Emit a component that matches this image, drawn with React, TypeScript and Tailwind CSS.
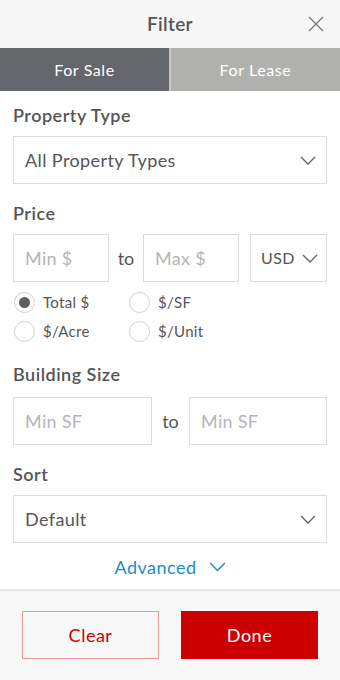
import React from "react";

const Chevron = ({ color = "#666", w = 16 }: { color?: string; w?: number }) => (
  <svg width={w} height={w / 2 + 1} viewBox="0 0 16 9" fill="none">
    <path d="M1 1 L8 8 L15 1" stroke={color} strokeWidth="1.4" />
  </svg>
);

const Radio = ({ checked, label }: { checked?: boolean; label: string }) => (
  <div className="flex items-center gap-[8px] h-[24px]">
    <div className="w-[21px] h-[21px] rounded-full border border-[#cfcfcf] bg-white flex items-center justify-center">
      {checked && <div className="w-[11px] h-[11px] rounded-full bg-[#5b5e63]" />}
    </div>
    <span className="text-[15px] tracking-[0.3px] text-[#555]">{label}</span>
  </div>
);

export default function App() {
  return (
    <div
      className="w-[340px] h-[680px] flex flex-col bg-white"
      style={{ fontFamily: "Lato, 'Noto Sans', sans-serif" }}
    >
      <div className="h-[48px] bg-[#f7f7f7] flex items-center justify-center relative">
        <span className="text-[19px] tracking-[0.3px] font-semibold text-[#555]">Filter</span>
        <svg className="absolute left-[308px] top-[16px]" width="16" height="16" viewBox="0 0 16 16">
          <path d="M1 1 L15 15 M15 1 L1 15" stroke="#777" strokeWidth="1.3" />
        </svg>
      </div>
      <div className="flex h-[43px]">
        <div className="w-[169px] bg-[#63666b] text-white text-[16px] tracking-[0.6px] flex items-center justify-center">For Sale</div>
        <div className="w-[2px] bg-[#c9cac8]" />
        <div className="flex-1 bg-[#b0b1ae] text-white text-[16px] tracking-[0.6px] flex items-center justify-center">For Lease</div>
      </div>
      <div className="flex-1 px-[13px] flex flex-col">
        <div className="mt-[12px] text-[18px] tracking-[0.5px] font-semibold text-[#555] h-[24px] leading-[24px]">Property Type</div>
        <div className="mt-[9px] h-[48px] border border-[#dcdcdc] flex items-center justify-between pl-[11px] pr-[10px]">
          <span className="text-[18px] tracking-[0.4px] text-[#555]">All Property Types</span>
          <Chevron />
        </div>
        <div className="mt-[17px] text-[18px] tracking-[0.5px] font-semibold text-[#555] h-[24px] leading-[24px]">Price</div>
        <div className="mt-[9px] flex items-center h-[48px]">
          <div className="w-[96px] h-[48px] border border-[#dcdcdc] flex items-center pl-[11px] text-[18px] tracking-[0.3px] text-[#b5b5b5]">Min $</div>
          <span className="w-[34px] text-center text-[18px] text-[#555]">to</span>
          <div className="w-[96px] h-[48px] border border-[#dcdcdc] flex items-center pl-[11px] text-[18px] tracking-[0.3px] text-[#b5b5b5]">Max $</div>
          <div className="ml-[11px] flex-1 h-[48px] border border-[#dcdcdc] flex items-center justify-between pl-[10px] pr-[8px]">
            <span className="text-[16px] tracking-[0.4px] text-[#555]">USD</span>
            <Chevron />
          </div>
        </div>
        <div className="mt-[8px] grid grid-cols-[115px_1fr] gap-y-[5px] pl-[1px]">
          <Radio checked label="Total $" />
          <Radio label="$/SF" />
          <Radio label="$/Acre" />
          <Radio label="$/Unit" />
        </div>
        <div className="mt-[19px] text-[18px] tracking-[0.5px] font-semibold text-[#555] h-[24px] leading-[24px]">Building Size</div>
        <div className="mt-[11px] flex items-center h-[48px]">
          <div className="w-[139px] h-[48px] border border-[#dcdcdc] flex items-center pl-[11px] text-[18px] tracking-[0.3px] text-[#b5b5b5]">Min SF</div>
          <span className="w-[37px] text-center text-[18px] text-[#555]">to</span>
          <div className="flex-1 h-[48px] border border-[#dcdcdc] flex items-center pl-[11px] text-[18px] tracking-[0.3px] text-[#b5b5b5]">Min SF</div>
        </div>
        <div className="mt-[17px] text-[18px] tracking-[0.5px] font-semibold text-[#555] h-[24px] leading-[24px]">Sort</div>
        <div className="mt-[9px] h-[48px] border border-[#dcdcdc] flex items-center justify-between pl-[11px] pr-[10px]">
          <span className="text-[18px] tracking-[0.4px] text-[#555]">Default</span>
          <Chevron />
        </div>
        <div className="mt-[12px] flex items-center justify-center gap-[12px] h-[24px]">
          <span className="text-[18px] tracking-[0.5px] text-[#1a8ccc]">Advanced</span>
          <Chevron color="#1a8ccc" w={17} />
        </div>
      </div>
      <div className="h-[91px] border-t-2 border-[#e6e6e6] bg-[#f8f8f8] flex items-start justify-between px-[22px] pt-[20px]">
        <div className="w-[137px] h-[48px] border border-[#e99a9a] bg-[#f8f8f8] flex items-center justify-center text-[18px] tracking-[0.5px] text-[#cc0000]">Clear</div>
        <div className="w-[137px] h-[48px] bg-[#cc0000] flex items-center justify-center text-[18px] tracking-[0.5px] text-white">Done</div>
      </div>
    </div>
  );
}
